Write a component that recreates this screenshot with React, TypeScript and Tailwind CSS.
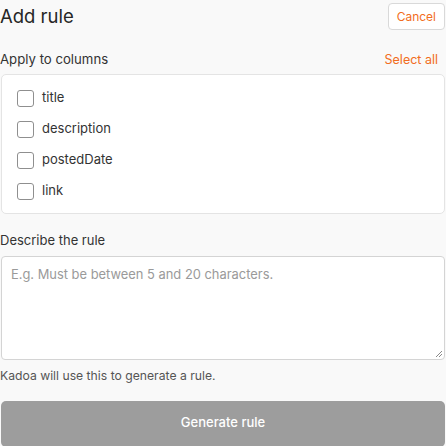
export default function App() {
  const columns = ['title', 'description', 'postedDate', 'link'];

  return (
    <div
      className="w-[446px] h-[446px] overflow-hidden bg-[#f9f9f9] text-[#2b2b2b]"
      style={{ fontFamily: 'Inter, "Noto Sans", sans-serif' }}
    >
      <div className="flex items-center justify-between pt-[3px] pr-px">
        <h2 className="text-[18.5px] leading-[27px] font-normal text-[#262626]">Add rule</h2>
        <button className="h-[27px] px-[8px] rounded-[4px] border border-[#d9d9d9] bg-white text-[12px] text-[#f26d21]">
          Cancel
        </button>
      </div>

      <div className="flex items-center justify-between mt-[21px] pr-[8px] h-[18px]">
        <span className="text-[13.2px] text-[#333]">Apply to columns</span>
        <button className="text-[12.5px] text-[#f26d21]">Select all</button>
      </div>

      <div className="mt-[5px] mx-px bg-white border border-[#e4e4e4] rounded-[5px] pt-[15px] pb-[14px] pl-[15px] flex flex-col gap-[15px]">
        {columns.map((c) => (
          <label key={c} className="flex items-center gap-[8px] h-[16px]">
            <span className="w-[17px] h-[17px] rounded-[3px] border border-[#8f8f8f] bg-white" />
            <span className="text-[13px] text-[#333]">{c}</span>
          </label>
        ))}
      </div>

      <div className="mt-[18px] h-[18px] flex items-center text-[13px] text-[#333]">Describe the rule</div>

      <div className="relative mt-[6px] mx-px h-[104px] bg-white border border-[#d4d4d4] rounded-[4px]">
        <div className="pl-[9px] pt-[8px] text-[12.9px] text-[#9a9a9a]">
          E.g. Must be between 5 and 20 characters.
        </div>
        <svg className="absolute right-[1px] bottom-[1px]" width="8" height="8" viewBox="0 0 8 8">
          <path d="M7 1L1 7M7 4L4 7" stroke="#8a8a8a" strokeWidth="1" />
        </svg>
      </div>

      <div className="mt-[7px] text-[12.2px] text-[#555]">Kadoa will use this to generate a rule.</div>

      <button className="mt-[16px] mx-px w-[444px] h-[46px] rounded-[5px] bg-[#9d9d9d] text-white text-[13px] font-medium flex items-center justify-center pb-[4px]">
        Generate rule
      </button>
    </div>
  );
}
